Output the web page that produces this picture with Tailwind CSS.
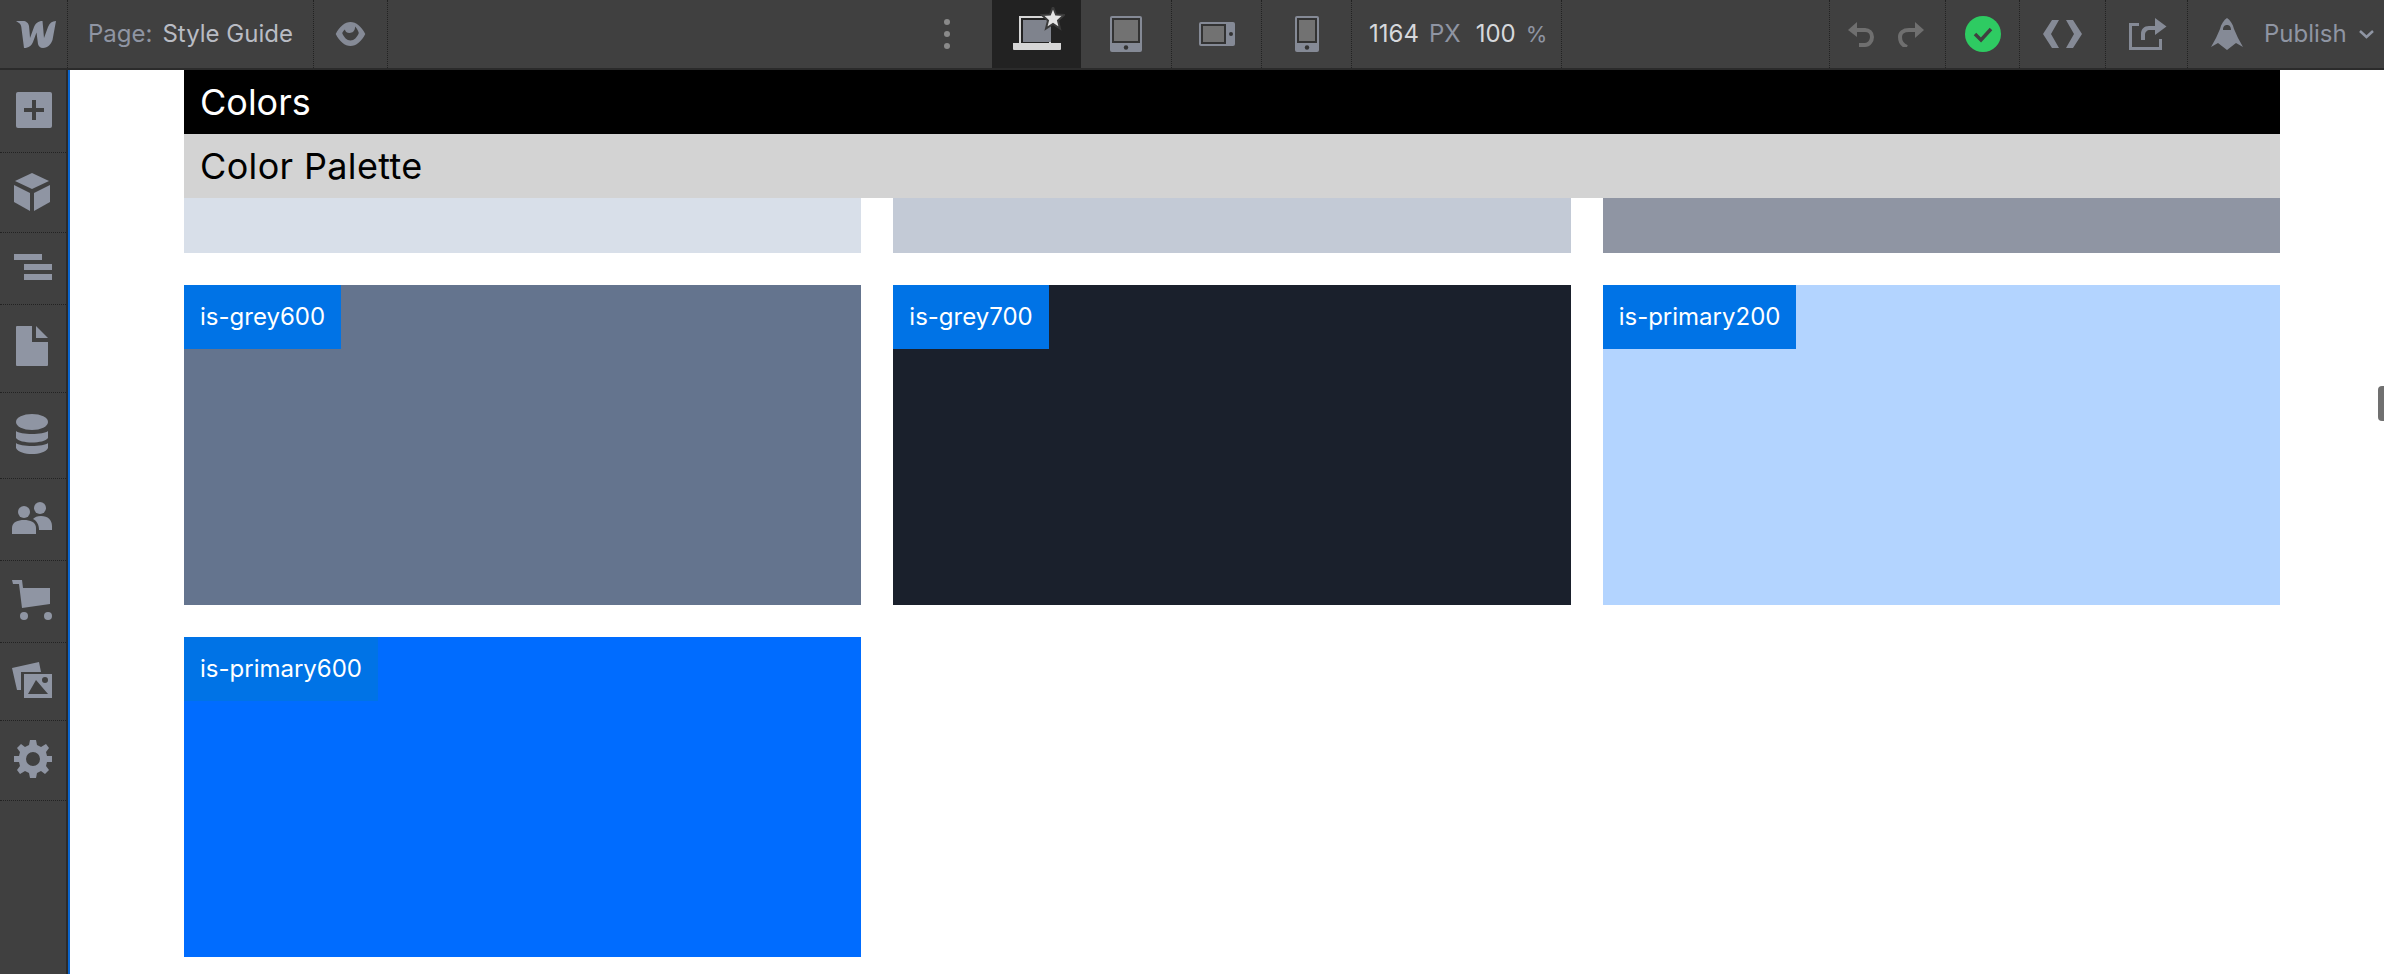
<!DOCTYPE html>
<html lang="en">
<head>
    <meta charset="UTF-8">
    <meta name="viewport" content="width=device-width, initial-scale=1.0">
    <title>Style Guide</title>
    <script src="https://cdn.jsdelivr.net/npm/@tailwindcss/browser@4"></script>
</head>
<body class="h-[974px] w-[2384px] overflow-hidden bg-white font-['Inter',sans-serif] relative">
    <!-- top bar -->
    <header class="flex h-[70px] border-b-2 border-[#2b2b2b] bg-[#404040] text-[24px] text-[#8f95a3]">
        <div class="flex w-[68px] items-center border-r border-dotted border-[#222] pl-[16px]">
            <svg width="40" height="28" viewBox="0 0 40 28" fill="#8f95a3"><path d="M40 1C36 1 33.500 3 32 7L28 18C27.800 14 26.500 1 26.500 1 22 1 19.500 3.500 18 7L14 18C13.900 14 13 6 13 6 12.600 3 10 1 7 1L0 1 3 3C4.500 4 5 5 5.300 7L8 28C13 28 15.500 25.500 17 22L20.500 12.500 22 24C22.500 26 24 28 27 28 32 28 35 24 36.500 20Z"/></svg>
        </div>
        <div class="flex w-[246px] items-center gap-[10px] border-r border-dotted border-[#222] pl-[20px]">
            <span>Page:</span><span class="text-[#b9bcc4]">Style Guide</span>
        </div>
        <div class="flex w-[74px] items-center border-r border-dotted border-[#222] pl-[21px]">
            <svg width="31" height="24" viewBox="0 0 32 26" fill="#858a96"><path d="M0 13C4 5 10 0 16 0S28 5 32 13C28 21 22 26 16 26S4 21 0 13ZM7 12C9 17 12 20 16 20S23 17 25 12C24 9 23 7 21 5 21 10 18 12 15 12 12 12 10 10 10 8 8.500 9 8 10 7 12Z"/></svg>
        </div>
        <div class="flex w-[604px] items-center">
            <div class="ml-[556px] flex flex-col gap-[6px]">
                <span class="h-[6px] w-[6px] rounded-full bg-[#8a8a8a]"></span>
                <span class="h-[6px] w-[6px] rounded-full bg-[#8a8a8a]"></span>
                <span class="h-[6px] w-[6px] rounded-full bg-[#8a8a8a]"></span>
            </div>
        </div>
        <div class="flex w-[89px] items-center border-x border-dotted border-[#222] bg-[#222] pb-[10px] pl-[20px]">
            <svg width="52" height="44" viewBox="0 0 52 44">
                <path d="M6 9H38V36H36V11H8V36H6Z" fill="#d6d6d6"/>
                <rect x="10" y="13" width="28" height="22" fill="#7f838d"/>
                <path d="M0 36H48V42Q48 43 47 43H1Q0 43 0 42Z" fill="#d6d6d6"/>
                <path d="M40 0L43 7.500 51 8 45 13.500 47 21.500 40 17 33 21.500 35 13.500 29 8 37 7.500Z" fill="#e4e4e4" stroke="#3a3a3a" stroke-width="2"/>
            </svg>
        </div>
        <div class="flex w-[91px] items-center justify-center border-r border-dotted border-[#222]">
            <svg width="32" height="36" viewBox="0 0 32 36">
                <rect width="32" height="36" rx="2" fill="#858a96"/><rect x="2" y="2" width="28" height="25" fill="#333"/><rect x="4" y="4" width="24" height="21" fill="#727272"/><circle cx="16" cy="31.500" r="2.200" fill="#333"/>
            </svg>
        </div>
        <div class="flex w-[90px] items-center justify-center border-r border-dotted border-[#222]">
            <svg width="36" height="24" viewBox="0 0 36 24">
                <rect width="36" height="24" rx="2" fill="#858a96"/><rect x="2" y="2" width="25" height="20" fill="#333"/><rect x="4" y="4" width="21" height="16" fill="#727272"/><circle cx="32" cy="12" r="2" fill="#333"/>
            </svg>
        </div>
        <div class="flex w-[90px] items-center justify-center border-r border-dotted border-[#222]">
            <svg width="24" height="36" viewBox="0 0 24 36">
                <rect width="24" height="36" rx="2" fill="#858a96"/><rect x="2" y="2" width="20" height="25" fill="#333"/><rect x="4" y="4" width="16" height="21" fill="#727272"/><circle cx="12" cy="31.500" r="2.200" fill="#333"/>
            </svg>
        </div>
        <div class="flex w-[210px] items-center border-r border-dotted border-[#222] pl-[17px] text-[#8f95a3]">
            <span class="text-[#d6d8dc]">1164</span><span class="ml-[10px]">PX</span><span class="ml-[15px] text-[#d6d8dc]">100</span><span class="ml-[10px] text-[22px]">%</span>
        </div>
        <div class="w-[268px] border-r border-dotted border-[#222]"></div>
        <div class="flex w-[116px] items-center gap-[24px] border-r border-dotted border-[#222] pl-[18px]">
            <svg width="26" height="25" viewBox="0 0 26 25" fill="none" stroke="#6f6f6f" stroke-width="4"><path d="M5 8H17C21 8 24 11 24 15S21 23 17 23H11"/><path d="M9 0V15L0 8Z" fill="#6f6f6f" stroke="none"/></svg>
            <svg width="26" height="25" viewBox="0 0 26 25" fill="none" stroke="#6f6f6f" stroke-width="4"><path d="M21 8H11C5 8 2 11 2 15S4 23 9 25"/><path d="M17 0V16L26 8Z" fill="#6f6f6f" stroke="none"/></svg>
        </div>
        <div class="flex w-[74px] items-center justify-center border-r border-dotted border-[#222]">
            <svg width="36" height="36" viewBox="0 0 36 36"><circle cx="18" cy="18" r="18" fill="#2ecb62"/><path d="M10 18L16 24 26 13" fill="none" stroke="#404040" stroke-width="3.500"/></svg>
        </div>
        <div class="flex w-[86px] items-center justify-center border-r border-dotted border-[#222]">
            <svg width="39" height="28" viewBox="0 0 39 28" fill="#858a96"><path d="M9 0H16L8 14 16 28H9L0 14Z"/><path d="M30 0H23L31 14 23 28H30L39 14Z"/></svg>
        </div>
        <div class="flex w-[82px] items-center border-r border-dotted border-[#222] pl-[23px]">
            <svg width="38" height="32" viewBox="0 0 38 32" fill="#858a96"><path d="M0 5H10V8H3V29H30V21H33V32H0Z"/><path d="M12 22V16C12 11 15 8 20 8H26V0L37.500 8.500 26 17V12H21C18 12 16 14 16 17V22Z"/></svg>
        </div>
        <div class="flex flex-1 items-center pl-[23px]">
            <svg width="32" height="32" viewBox="0 0 32 32" fill="#858a96"><path fill-rule="evenodd" d="M16 0C19 2 22 6 23 11L27 20 32 29 25 25 16 32 7 25 0 29 5 20 9 11C10 6 13 2 16 0ZM16 7C14 7 12 8 12 12H20C20 8 18 7 16 7Z"/></svg>
            <span class="ml-[21px]">Publish</span>
            <svg class="ml-[12px]" width="15" height="9" viewBox="0 0 15 9" fill="none" stroke="#8f95a3" stroke-width="2.500"><path d="M1 1L7.500 7 14 1"/></svg>
        </div>
    </header>

    <div class="flex h-[904px]">
        <!-- left sidebar -->
        <aside class="w-[70px] shrink-0 border-r-2 border-[#0a66d0]">
            <div class="h-full w-[68px] border-r-2 border-[#2b2b2b] bg-[#404040]">
                <div class="flex h-[83px] items-center border-b border-dotted border-[#222] pb-[2px] pl-[16px]">
                    <svg width="36" height="36" viewBox="0 0 36 36"><rect width="36" height="36" rx="2" fill="#8f95a3"/><path d="M16 8H20V16H28V20H20V28H16V20H8V16H16Z" fill="#404040"/></svg>
                </div>
                <div class="flex h-[80px] items-center border-b border-dotted border-[#222] pb-[2px] pl-[14px]">
                    <svg width="36" height="38" viewBox="0 0 36 38" fill="#8f95a3"><path d="M18 0L35 8 18 16 1 8Z"/><path d="M0 12L16 20V38L0 29Z"/><path d="M36 12L20 20V38L36 29Z"/></svg>
                </div>
                <div class="flex h-[72px] items-center border-b border-dotted border-[#222] pb-[3px] pl-[14px]">
                    <svg width="38" height="26" viewBox="0 0 38 26" fill="#8f95a3"><rect width="28" height="6"/><rect x="10" y="10" width="28" height="6"/><rect x="10" y="20" width="28" height="6"/></svg>
                </div>
                <div class="flex h-[88px] items-center border-b border-dotted border-[#222] pb-[5px] pl-[16px]">
                    <svg width="32" height="40" viewBox="0 0 32 40" fill="#8f95a3"><path d="M1 0H16V16H32V39Q32 40 31 40H1Q0 40 0 39V1Q0 0 1 0Z"/><path d="M20 0L32 12H20Z"/></svg>
                </div>
                <div class="flex h-[86px] items-center border-b border-dotted border-[#222] pb-[3px] pl-[16px]">
                    <svg width="32" height="40" viewBox="0 0 32 40" fill="#8f95a3"><ellipse cx="16" cy="8" rx="16" ry="8"/><path d="M0 17C4 21 28 21 32 17V24C28 30 4 30 0 24Z"/><path d="M0 29C4 33 28 33 32 29V34C28 42 4 42 0 34Z"/></svg>
                </div>
                <div class="flex h-[82px] items-center border-b border-dotted border-[#222] pb-[3px] pl-[12px]">
                    <svg width="40" height="32" viewBox="0 0 40 32" fill="#8f95a3"><circle cx="12" cy="10" r="6"/><circle cx="28" cy="6" r="6"/><path d="M0 32V26C0 20 6 18 12 18S24 20 24 26V32Z"/><path d="M21 17C23 15 25 14 29 14 36 14 40 18 40 24V28H27C27 23 25 19 21 17Z"/></svg>
                </div>
                <div class="flex h-[82px] items-center border-b border-dotted border-[#222] pb-[3px] pl-[12px]">
                    <svg width="40" height="40" viewBox="0 0 40 40" fill="#8f95a3"><path d="M0 0H10L11 8H38V24L10 28 7 4H1Z"/><circle cx="12" cy="36" r="4"/><circle cx="36" cy="36" r="4"/></svg>
                </div>
                <div class="flex h-[78px] items-center border-b border-dotted border-[#222] pb-[3px] pl-[12px]">
                    <svg width="40" height="36" viewBox="0 0 40 36" fill="#8f95a3"><path d="M0 6L27 0 29 10H9V28H5Z"/><path fill-rule="evenodd" d="M12 12H40V36H12ZM16 32H36L24 18ZM33 15A3 3 0 1 0 33 21 3 3 0 1 0 33 15Z"/></svg>
                </div>
                <div class="flex h-[80px] items-center border-b border-dotted border-[#222] pb-[4px] pl-[14px]">
                    <svg width="38" height="38" viewBox="0 0 38 38" fill="#8f95a3"><path fill-rule="evenodd" d="M16 0H22L23 5 27 7 32 4 35 8 32 12 33 16H38V22H33L32 26 35 30 31 34 27 31 23 33 22 38H16L15 33 11 31 6 34 3 30 6 26 5 22H0V16H5L6 12 3 8 7 4 11 7 15 5ZM19 12A7 7 0 1 0 19 26 7 7 0 1 0 19 12Z"/></svg>
                </div>
            </div>
        </aside>

        <!-- canvas -->
        <main class="flex-1 pl-[114px] pr-[104px]">
            <h1 class="flex h-[64px] items-center bg-black px-[16px] text-[36px] text-white">Colors</h1>
            <h2 class="flex h-[64px] items-center bg-[#d3d3d3] px-[16px] text-[36px] tracking-[0.35px] text-black">Color Palette</h2>
            <div class="grid grid-cols-3 gap-[32px] text-[24px] text-white">
                <div class="h-[55px] bg-[#d8dfe9]"></div>
                <div class="h-[55px] bg-[#c3cad6]"></div>
                <div class="h-[55px] bg-[#8f95a3]"></div>
                <div class="h-[320px] bg-[#64748e]"><span class="inline-block h-[64px] bg-[#0073e6] p-[16px] leading-[32px]">is-grey600</span></div>
                <div class="h-[320px] bg-[#1a202c]"><span class="inline-block h-[64px] bg-[#0073e6] p-[16px] leading-[32px]">is-grey700</span></div>
                <div class="h-[320px] bg-[#b3d4ff]"><span class="inline-block h-[64px] bg-[#0073e6] p-[16px] leading-[32px]">is-primary200</span></div>
                <div class="h-[320px] bg-[#006cff]"><span class="inline-block h-[64px] bg-[#0073e6] p-[16px] leading-[32px]">is-primary600</span></div>
            </div>
        </main>
    </div>

    <!-- canvas resize handle -->
    <div class="absolute right-0 top-[386px] h-[35px] w-[6px] rounded-l-[4px] bg-[#707070]"></div>
</body>
</html>
